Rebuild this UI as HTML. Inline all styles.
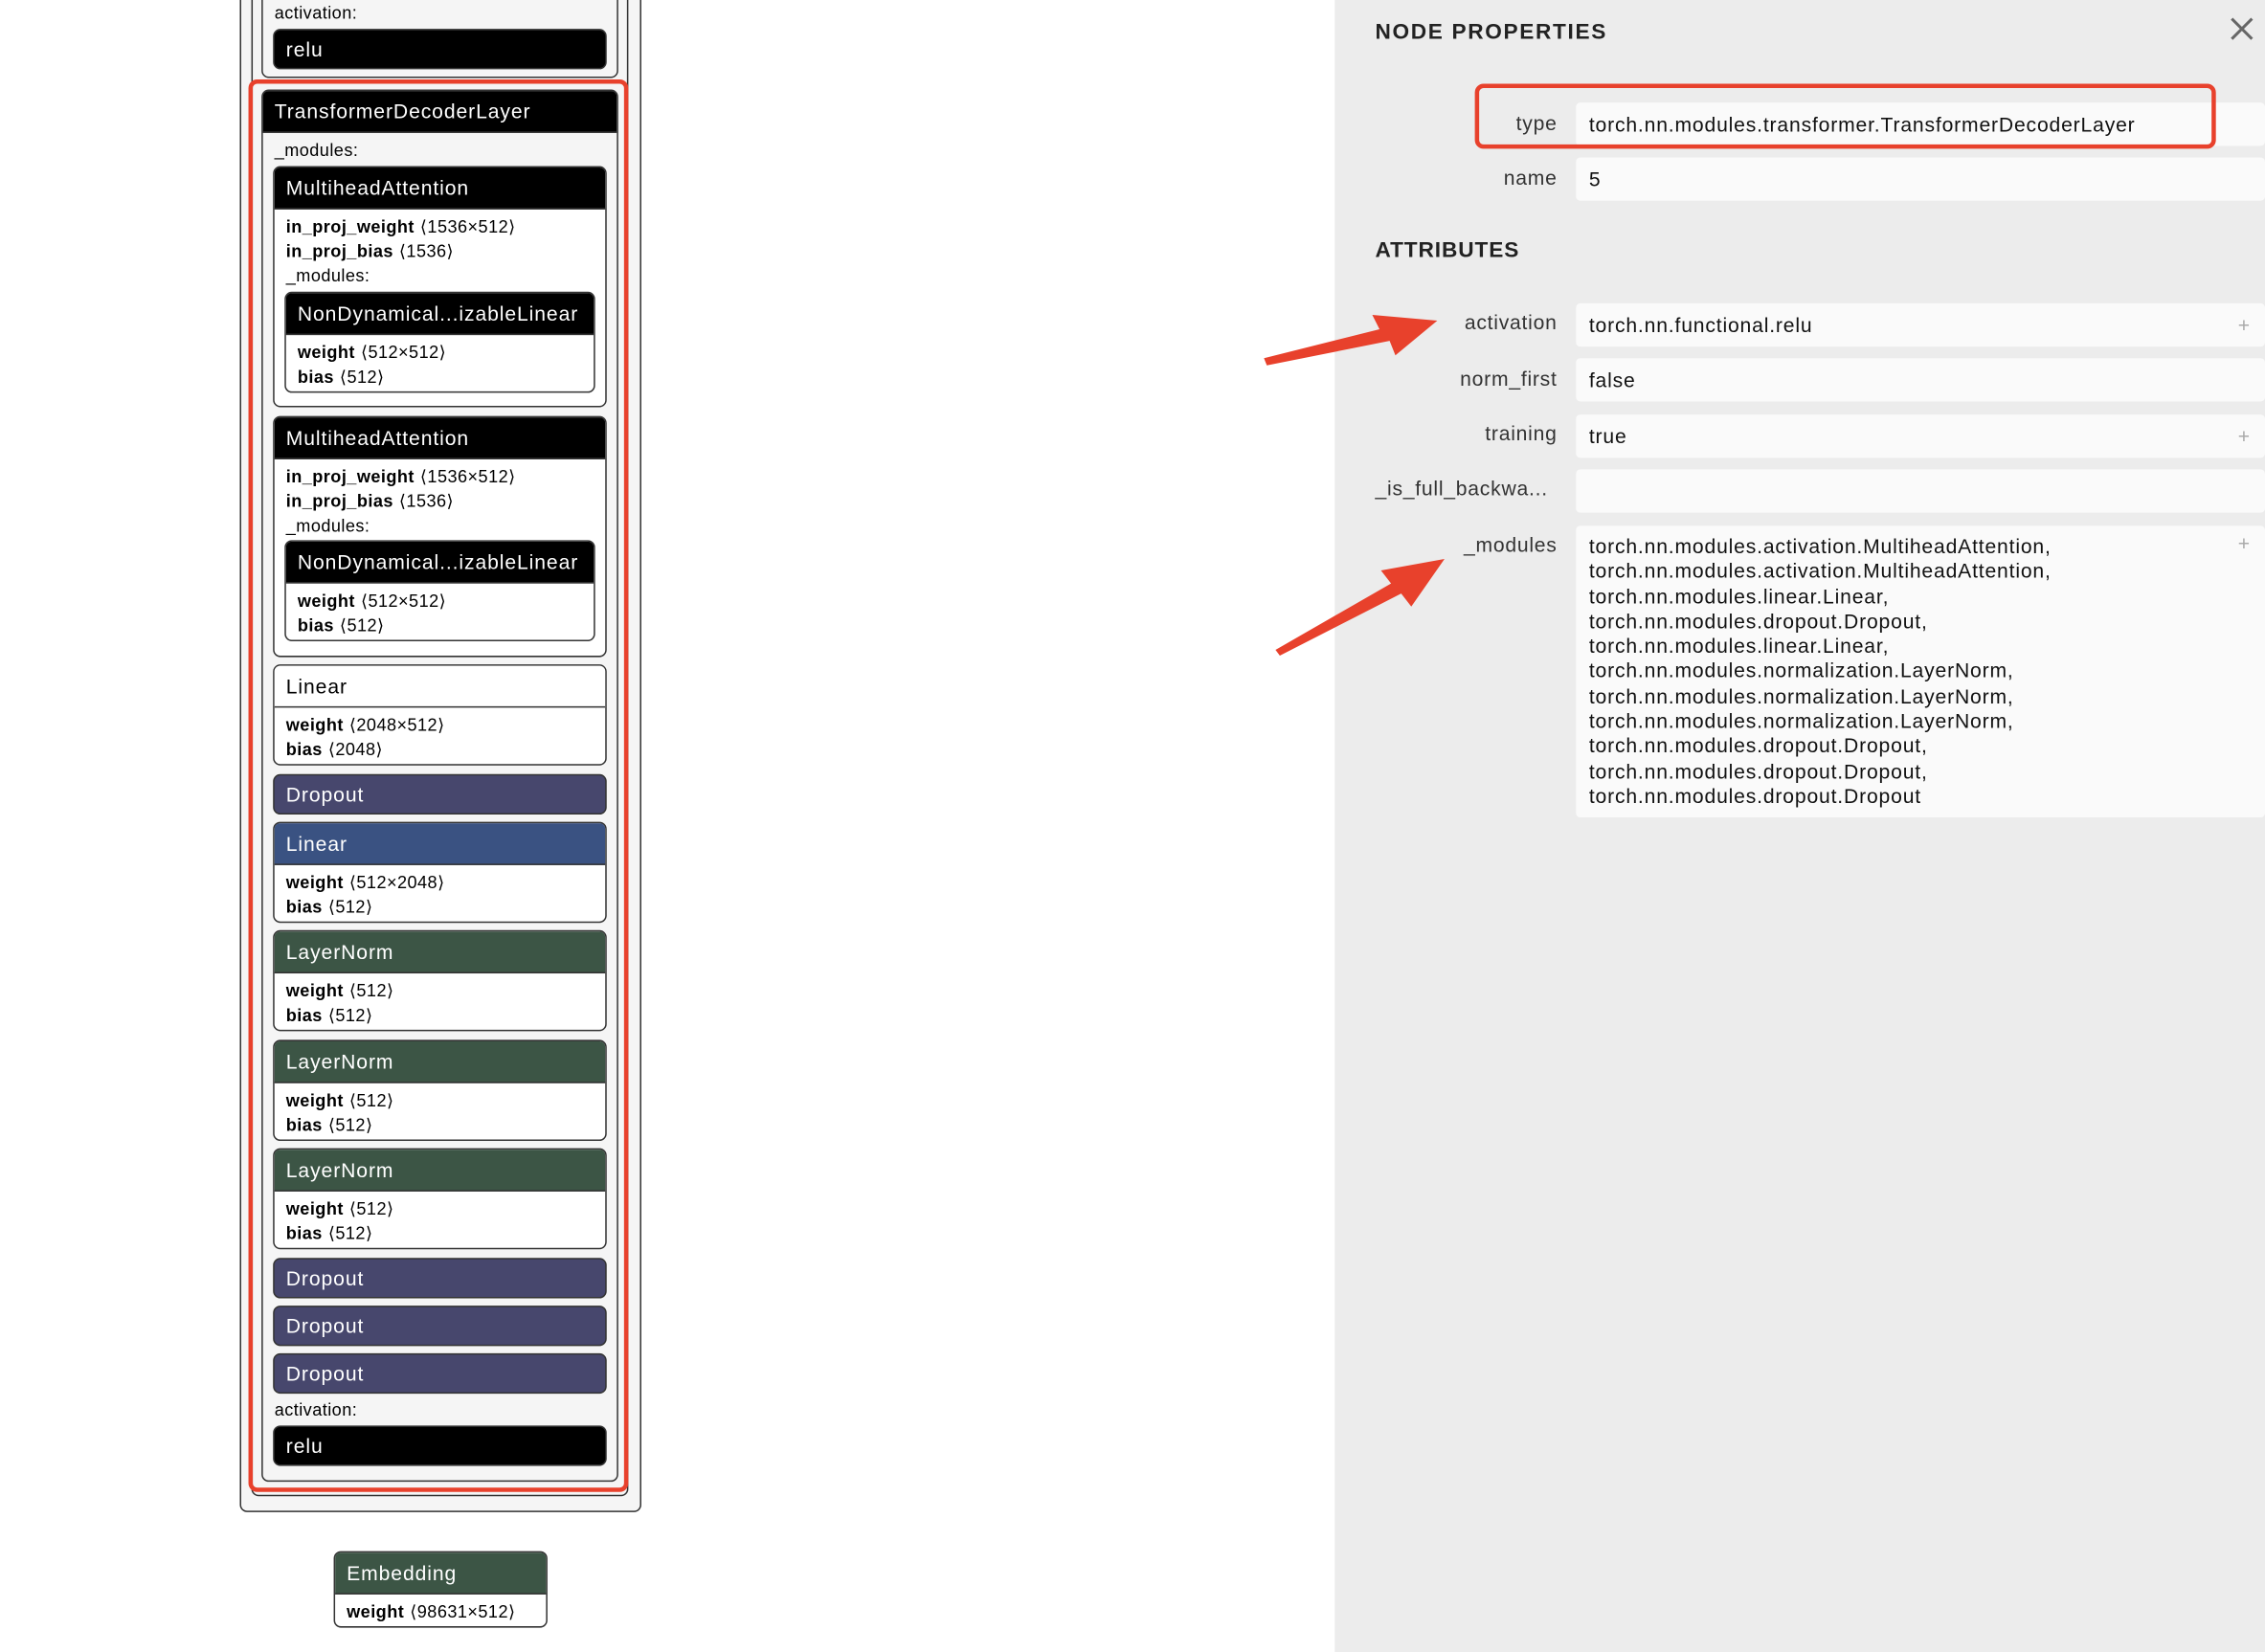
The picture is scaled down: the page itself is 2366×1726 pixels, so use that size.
<!DOCTYPE html>
<html><head><meta charset="utf-8"><style>
html,body{margin:0;padding:0;background:#fff;overflow:hidden}
#w{position:absolute;left:0;top:0;width:1568px;height:1144px;transform:scale(1.50893);transform-origin:0 0;font-family:"Liberation Sans",sans-serif;}
.a{position:absolute;box-sizing:border-box}
.box{position:absolute;box-sizing:border-box;border:1px solid #333;border-radius:5px;background:#f5f5f5;overflow:hidden}
.node{position:absolute;box-sizing:border-box;border:1px solid #333;border-radius:5px;background:#fff;overflow:hidden}
.hd{height:28px;line-height:28px;padding-left:8px;color:#fff;font-size:14px;border-bottom:1px solid #333;letter-spacing:.6px}
.ln{font-size:12px;line-height:17px;padding-left:8px;color:#000;white-space:nowrap;letter-spacing:.3px}
.ln b{font-weight:bold;margin-right:4px}
.lbl{position:absolute;font-size:12px;color:#000;letter-spacing:.3px}
.v{position:absolute;left:1091px;width:477px;background:#fafafa;border-radius:3px;font-size:14px;color:#111;padding-left:9px;box-sizing:border-box;line-height:30px;letter-spacing:.55px;white-space:nowrap}
.k{position:absolute;width:160px;left:918px;text-align:right;font-size:14px;color:#333;line-height:30px;letter-spacing:.5px}
.pl{position:absolute;right:10px;color:#aaa;font-size:14px}
</style></head><body><div id="w">
<div class="box" style="left:166px;top:-20px;width:278px;height:1067px"></div>
<div class="box" style="left:174px;top:-20px;width:261px;height:1056px"></div>
<div class="box" style="left:181px;top:-20px;width:247px;height:74px"></div>
<div class="lbl" style="left:190px;top:2px">activation:</div>
<div class="node" style="left:189px;top:20px;width:231px;height:28px;background:#000;"><div class="hd" style="border:none;height:26px;line-height:26px">relu</div></div>

<div class="box" style="left:181px;top:62px;width:247px;height:964px">
 <div class="hd" style="background:#000">TransformerDecoderLayer</div>
</div>
<div class="lbl" style="left:190px;top:97px">_modules:</div>

<div class="node" style="left:189px;top:115px;width:231px;height:167px">
 <div class="hd" style="background:#000">MultiheadAttention</div>
 <div style="height:4px"></div>
 <div class="ln"><b>in_proj_weight</b>⟨1536×512⟩</div>
 <div class="ln"><b>in_proj_bias</b>⟨1536⟩</div>
 <div class="ln">_modules:</div>
</div>
<div class="node" style="left:197px;top:202px;width:215px;height:70px">
 <div class="hd" style="background:#000">NonDynamical...izableLinear</div>
 <div style="height:4px"></div>
 <div class="ln"><b>weight</b>⟨512×512⟩</div>
 <div class="ln"><b>bias</b>⟨512⟩</div>
</div>
<div class="node" style="left:189px;top:288px;width:231px;height:167px">
 <div class="hd" style="background:#000">MultiheadAttention</div>
 <div style="height:4px"></div>
 <div class="ln"><b>in_proj_weight</b>⟨1536×512⟩</div>
 <div class="ln"><b>in_proj_bias</b>⟨1536⟩</div>
 <div class="ln">_modules:</div>
</div>
<div class="node" style="left:197px;top:374px;width:215px;height:70px">
 <div class="hd" style="background:#000">NonDynamical...izableLinear</div>
 <div style="height:4px"></div>
 <div class="ln"><b>weight</b>⟨512×512⟩</div>
 <div class="ln"><b>bias</b>⟨512⟩</div>
</div>
<div class="node" style="left:189px;top:460px;width:231px;height:70px">
 <div class="hd" style="background:#fff;color:#000">Linear</div>
 <div style="height:4px"></div>
 <div class="ln"><b>weight</b>⟨2048×512⟩</div>
 <div class="ln"><b>bias</b>⟨2048⟩</div>
</div>
<div class="node" style="left:189px;top:536px;width:231px;height:28px;background:#47476d"><div class="hd" style="border:none;height:26px;line-height:26px">Dropout</div></div>
<div class="node" style="left:189px;top:569px;width:231px;height:70px">
 <div class="hd" style="background:#3a5282">Linear</div>
 <div style="height:4px"></div>
 <div class="ln"><b>weight</b>⟨512×2048⟩</div>
 <div class="ln"><b>bias</b>⟨512⟩</div>
</div>
<div class="node" style="left:189px;top:644px;width:231px;height:70px">
 <div class="hd" style="background:#3c5545">LayerNorm</div>
 <div style="height:4px"></div>
 <div class="ln"><b>weight</b>⟨512⟩</div>
 <div class="ln"><b>bias</b>⟨512⟩</div>
</div>
<div class="node" style="left:189px;top:720px;width:231px;height:70px">
 <div class="hd" style="background:#3c5545">LayerNorm</div>
 <div style="height:4px"></div>
 <div class="ln"><b>weight</b>⟨512⟩</div>
 <div class="ln"><b>bias</b>⟨512⟩</div>
</div>
<div class="node" style="left:189px;top:795px;width:231px;height:70px">
 <div class="hd" style="background:#3c5545">LayerNorm</div>
 <div style="height:4px"></div>
 <div class="ln"><b>weight</b>⟨512⟩</div>
 <div class="ln"><b>bias</b>⟨512⟩</div>
</div>
<div class="node" style="left:189px;top:871px;width:231px;height:28px;background:#47476d"><div class="hd" style="border:none;height:26px;line-height:26px">Dropout</div></div>
<div class="node" style="left:189px;top:904px;width:231px;height:28px;background:#47476d"><div class="hd" style="border:none;height:26px;line-height:26px">Dropout</div></div>
<div class="node" style="left:189px;top:937px;width:231px;height:28px;background:#47476d"><div class="hd" style="border:none;height:26px;line-height:26px">Dropout</div></div>
<div class="lbl" style="left:190px;top:969px">activation:</div>
<div class="node" style="left:189px;top:987px;width:231px;height:28px;background:#000"><div class="hd" style="border:none;height:26px;line-height:26px">relu</div></div>

<div class="a" style="left:172px;top:55px;width:263px;height:978px;border:3px solid #e8412c;border-radius:6px"></div>

<div class="node" style="left:231px;top:1074px;width:148px;height:53px">
 <div class="hd" style="background:#3c5545">Embedding</div>
 <div style="height:4px"></div>
 <div class="ln"><b>weight</b>⟨98631×512⟩</div>
</div>

<div class="a" style="left:924px;top:0;width:644px;height:1144px;background:#ececec"></div>
<div class="a" style="left:952px;top:14px;font-size:15px;font-weight:bold;letter-spacing:1.1px;color:#222">NODE PROPERTIES</div>
<svg class="a" style="left:1543px;top:11px" width="18" height="18"><path d="M2 2L16 16M16 2L2 16" stroke="#666" stroke-width="2"/></svg>

<div class="k" style="top:70px">type</div><div class="v" style="top:71px;height:30px">torch.nn.modules.transformer.TransformerDecoderLayer</div>
<div class="k" style="top:108px">name</div><div class="v" style="top:109px;height:30px">5</div>
<div class="a" style="left:952px;top:165px;font-size:15px;font-weight:bold;letter-spacing:.6px;color:#222">ATTRIBUTES</div>
<div class="k" style="top:208px">activation</div><div class="v" style="top:210px;height:30px">torch.nn.functional.relu<span class="pl">+</span></div>
<div class="k" style="top:247px">norm_first</div><div class="v" style="top:248px;height:30px">false</div>
<div class="k" style="top:285px">training</div><div class="v" style="top:287px;height:30px">true<span class="pl">+</span></div>
<div class="k" style="top:323px;left:952px;width:140px;text-align:left">_is_full_backwa...</div><div class="v" style="top:325px;height:30px"></div>
<div class="k" style="top:362px">_modules</div>
<div class="v" style="top:364px;height:202px;line-height:17.3px;padding-top:6px">torch.nn.modules.activation.MultiheadAttention,<br>torch.nn.modules.activation.MultiheadAttention,<br>torch.nn.modules.linear.Linear,<br>torch.nn.modules.dropout.Dropout,<br>torch.nn.modules.linear.Linear,<br>torch.nn.modules.normalization.LayerNorm,<br>torch.nn.modules.normalization.LayerNorm,<br>torch.nn.modules.normalization.LayerNorm,<br>torch.nn.modules.dropout.Dropout,<br>torch.nn.modules.dropout.Dropout,<br>torch.nn.modules.dropout.Dropout<span class="pl" style="top:4px">+</span></div>

<div class="a" style="left:1021px;top:58px;width:513px;height:45px;border:3px solid #e8412c;border-radius:6px"></div>

<svg class="a" style="left:0;top:0" width="1568" height="1144">
 <polygon points="875,248 955,228 950,218 995,222 966,246 962,236 877,253" fill="#e8412c"/>
 <polygon points="883,450 963,404 956,395 1000,387 977,420 970,411 886,454" fill="#e8412c"/>
</svg>
</div></body></html>
